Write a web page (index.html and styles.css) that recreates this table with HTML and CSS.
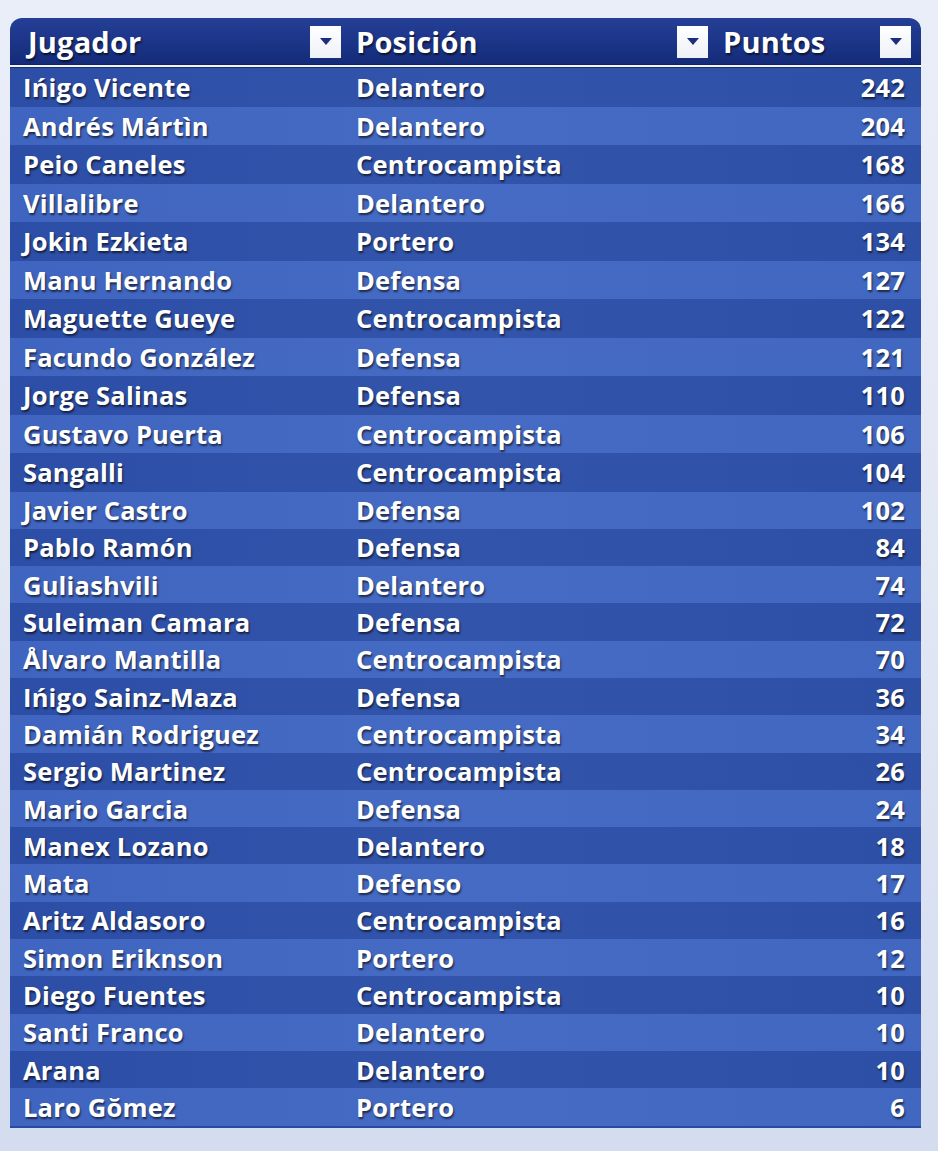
FILE: index.html
```html
<!DOCTYPE html>
<html lang="es">
<head>
<meta charset="utf-8">
<title>Puntos</title>
<link rel="stylesheet" href="styles.css">
</head>
<body>
<div class="table">
  <div class="head">
    <div class="hcell c1"><span>Jugador</span><span class="dd"></span></div>
    <div class="hcell c2"><span>Posición</span><span class="dd"></span></div>
    <div class="hcell c3"><span>Puntos</span><span class="dd"></span></div>
  </div>
  <div class="body">
    <div class="row"><span class="c1">Ińigo Vicente</span><span class="c2">Delantero</span><span class="c3">242</span></div>
    <div class="row"><span class="c1">Andrés Mártìn</span><span class="c2">Delantero</span><span class="c3">204</span></div>
    <div class="row"><span class="c1">Peio Caneles</span><span class="c2">Centrocampista</span><span class="c3">168</span></div>
    <div class="row"><span class="c1">Villalibre</span><span class="c2">Delantero</span><span class="c3">166</span></div>
    <div class="row"><span class="c1">Jokin Ezkieta</span><span class="c2">Portero</span><span class="c3">134</span></div>
    <div class="row"><span class="c1">Manu Hernando</span><span class="c2">Defensa</span><span class="c3">127</span></div>
    <div class="row"><span class="c1">Maguette Gueye</span><span class="c2">Centrocampista</span><span class="c3">122</span></div>
    <div class="row"><span class="c1">Facundo González</span><span class="c2">Defensa</span><span class="c3">121</span></div>
    <div class="row"><span class="c1">Jorge Salinas</span><span class="c2">Defensa</span><span class="c3">110</span></div>
    <div class="row"><span class="c1">Gustavo Puerta</span><span class="c2">Centrocampista</span><span class="c3">106</span></div>
    <div class="row"><span class="c1">Sangalli</span><span class="c2">Centrocampista</span><span class="c3">104</span></div>
    <div class="row"><span class="c1">Javier Castro</span><span class="c2">Defensa</span><span class="c3">102</span></div>
    <div class="row"><span class="c1">Pablo Ramón</span><span class="c2">Defensa</span><span class="c3">84</span></div>
    <div class="row"><span class="c1">Guliashvili</span><span class="c2">Delantero</span><span class="c3">74</span></div>
    <div class="row"><span class="c1">Suleiman Camara</span><span class="c2">Defensa</span><span class="c3">72</span></div>
    <div class="row"><span class="c1">Ålvaro Mantilla</span><span class="c2">Centrocampista</span><span class="c3">70</span></div>
    <div class="row"><span class="c1">Ińigo Sainz-Maza</span><span class="c2">Defensa</span><span class="c3">36</span></div>
    <div class="row"><span class="c1">Damián Rodriguez</span><span class="c2">Centrocampista</span><span class="c3">34</span></div>
    <div class="row"><span class="c1">Sergio Martinez</span><span class="c2">Centrocampista</span><span class="c3">26</span></div>
    <div class="row"><span class="c1">Mario Garcia</span><span class="c2">Defensa</span><span class="c3">24</span></div>
    <div class="row"><span class="c1">Manex Lozano</span><span class="c2">Delantero</span><span class="c3">18</span></div>
    <div class="row"><span class="c1">Mata</span><span class="c2">Defenso</span><span class="c3">17</span></div>
    <div class="row"><span class="c1">Aritz Aldasoro</span><span class="c2">Centrocampista</span><span class="c3">16</span></div>
    <div class="row"><span class="c1">Simon Eriknson</span><span class="c2">Portero</span><span class="c3">12</span></div>
    <div class="row"><span class="c1">Diego Fuentes</span><span class="c2">Centrocampista</span><span class="c3">10</span></div>
    <div class="row"><span class="c1">Santi Franco</span><span class="c2">Delantero</span><span class="c3">10</span></div>
    <div class="row"><span class="c1">Arana</span><span class="c2">Delantero</span><span class="c3">10</span></div>
    <div class="row"><span class="c1">Laro Gŏmez</span><span class="c2">Portero</span><span class="c3">6</span></div>
  </div>
</div>
</body>
</html>
```
FILE: styles.css
```css
html, body {
  margin: 0;
  padding: 0;
}
body {
  width: 938px;
  height: 1151px;
  background: linear-gradient(180deg, #eaeef8 0%, #e2e7f4 50%, #d4dcf0 100%);
  font-family: "Open Sans", "DejaVu Sans", sans-serif;
  font-weight: 700;
  color: #ffffff;
  padding-top: 18px;
  box-sizing: border-box;
  overflow: hidden;
}
.table {
  margin-left: 10px;
  width: 911px;
  border-radius: 12px 12px 0 0;
  overflow: hidden;
  border-bottom: 2px solid #2a4aa0;
}
.head {
  display: grid;
  grid-template-columns: 336px 370px 205px;
  height: 47px;
  background: linear-gradient(180deg, #253f97 0%, #1c3588 50%, #142b78 100%);
  border-bottom: 2px solid #f2f5fc;
  box-shadow: inset 0 -1px 0 #0f2260;
}
.hcell {
  display: flex;
  align-items: center;
  justify-content: space-between;
  font-size: 29px;
  letter-spacing: 0.2px;
  text-shadow: 1px 1.5px 2px rgba(0, 0, 0, 0.6);
}
.head .c1 { padding: 0 5px 0 18px; }
.head .c2 { padding: 0 8px 0 10px; }
.head .c3 { padding: 0 10px 0 7px; }
.dd {
  width: 31px;
  height: 32px;
  background: linear-gradient(180deg, #ffffff 0%, #eef1f8 100%);
  position: relative;
  flex: none;
  margin-top: 1px;
}
.dd::after {
  content: "";
  position: absolute;
  left: 10px;
  top: 12px;
  border-left: 6px solid transparent;
  border-right: 6px solid transparent;
  border-top: 7.5px solid #1a2f7e;
}
.body {
  border-top: 1px solid #1b3175;
}
.row {
  display: grid;
  grid-template-columns: 336px 370px 205px;
  height: 37.3px;
  align-items: center;
  font-size: 25.5px;
  letter-spacing: 0.2px;
  text-shadow: 1px 1.5px 2px rgba(0, 0, 0, 0.6);
  background: linear-gradient(90deg, #2d4ea6 0%, #3254ab 50%, #2e4fa6 100%);
}
.row:nth-child(-n+11) {
  height: 38.5px;
}
.row:nth-child(even) {
  background: linear-gradient(90deg, #4065c0 0%, #466bc4 50%, #4167c1 100%);
}
.row .c1 { padding-left: 13px; white-space: nowrap; }
.row .c2 { padding-left: 10px; white-space: nowrap; }
.row .c3 { text-align: right; padding-right: 16px; }
```
